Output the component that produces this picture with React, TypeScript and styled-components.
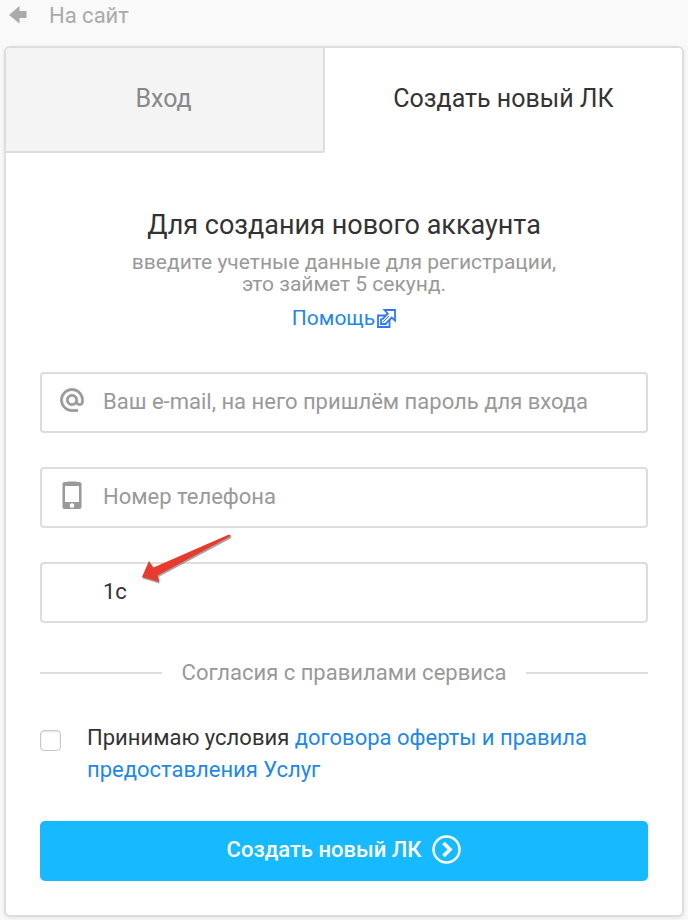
import React from "react";
import styled, { createGlobalStyle } from "styled-components";

const GlobalStyle = createGlobalStyle`
  *, *::before, *::after { box-sizing: border-box; }
  body {
    margin: 0;
    background: #f9f9f9;
    color: #333;
    font-family: Roboto, "Liberation Sans", sans-serif;
    font-size: 22px;
  }
  a { color: #1e88e5; text-decoration: none; }
`;

const Page = styled.div`
  padding: 0 4px 3px;
`;

const BackLink = styled.a`
  display: flex;
  align-items: center;
  gap: 22px;
  height: 30px;
  padding-left: 5px;
  && { color: #aaa; }
`;

const Card = styled.main`
  margin-top: 16px;
  background: #fff;
  border: 2px solid #ddd;
  border-radius: 6px;
  box-shadow: 0 1px 4px rgba(0, 0, 0, 0.08);
`;

const Tabs = styled.div`
  display: grid;
  grid-template-columns: 319fr 357fr;
`;

const Tab = styled.button<{ $active?: boolean }>`
  height: 105px;
  padding: ${(p) => (p.$active ? "0 0 4px" : "0 2px 2px 0")};
  border: 0 solid #ddd;
  border-width: ${(p) => (p.$active ? "0" : "0 2px 2px 0")};
  border-radius: ${(p) => (p.$active ? "0 4px 0 0" : "4px 0 3px 0")};
  background: ${(p) => (p.$active ? "#fff" : "#f4f4f4")};
  color: ${(p) => (p.$active ? "#333" : "#888")};
  font: inherit;
  font-size: 25px;
  cursor: pointer;
`;

const Form = styled.form`
  display: flex;
  flex-direction: column;
  padding: 52px 34px 34px;
`;

const Intro = styled.header`
  display: flex;
  flex-direction: column;
  align-items: center;
  text-align: center;
  margin-bottom: 39px;
  font-size: 21px;
`;

const Title = styled.h1`
  margin: 0 0 6px;
  font-size: 27px;
  line-height: 40px;
  font-weight: 400;
`;

const Subtitle = styled.p`
  margin: 0;
  color: #999;
  line-height: 22px;
`;

const HelpLink = styled.a`
  display: flex;
  align-items: center;
  gap: 2px;
  margin-top: 8px;
  line-height: 30px;
`;

const Fields = styled.div`
  display: grid;
  gap: 34px;
`;

const Field = styled.label`
  display: flex;
  align-items: center;
  height: 61px;
  padding: 0 16px 2px 15px;
  border: 2px solid #ddd;
  border-radius: 4px;
`;

const FieldIcon = styled.span`
  display: flex;
  justify-content: center;
  flex: 0 0 30px;
  margin: 0 16px 3px 0;
  color: #999;
`;

const Input = styled.input`
  flex: 1;
  min-width: 0;
  height: 100%;
  padding: 0;
  border: 0;
  outline: 0;
  background: transparent;
  color: #333;
  font: inherit;
  &::placeholder { color: #999; opacity: 1; }
`;

const Divider = styled.div`
  display: flex;
  align-items: center;
  gap: 20px;
  margin: 35px 0 34px;
  line-height: 30px;
  color: #999;
  &::before, &::after {
    content: "";
    flex: 1;
    height: 2px;
    background: #ddd;
  }
`;

const Consent = styled.div`
  display: flex;
  align-items: flex-start;
  gap: 26px;
  line-height: 32px;
`;

const Checkbox = styled.input`
  appearance: none;
  flex: none;
  width: 21px;
  height: 21px;
  margin: 8px 0 0;
  border: 1px solid #c8c8c8;
  border-radius: 4px;
  background: #fff;
  box-shadow: inset 0 1px 2px rgba(0, 0, 0, 0.12);
  &:checked { background: #1e88e5; }
`;

const Submit = styled.button`
  display: flex;
  align-items: center;
  justify-content: center;
  gap: 11px;
  height: 60px;
  margin-top: 35px;
  padding: 0 0 4px;
  border: 0;
  border-radius: 5px;
  background: #17b9ff;
  color: #fff;
  font: inherit;
  font-weight: 500;
  cursor: pointer;
`;

const PointedField = styled.div`
  position: relative;
`;

const Pointer = styled.svg`
  position: absolute;
  left: 99px;
  top: -30px;
  pointer-events: none;
`;

const BackArrow = () => (
  <svg width="18" height="18" viewBox="0 0 18 18" fill="#aaa" aria-hidden="true">
    <path d="M0 9 10.500 0v5H17.500v7H10.500v5.500z" />
  </svg>
);

const ExternalIcon = () => (
  <svg width="19" height="19" viewBox="0 0 19 19" fill="#fff" stroke="#2f77ee" strokeWidth="1.800" aria-hidden="true">
    <path d="M1 6.500h11.500V18H1z" />
    <path d="M7.500 1H18v10.500l-3.300-3-6 6.200H5v-4l5.800-6z" />
    <path d="M4 9.500v5.500h5.500" />
    <path d="m6 13 6-6" strokeWidth="1" />
  </svg>
);

const AtIcon = () => (
  <svg width="28" height="28" viewBox="0 0 24 24" fill="currentColor" stroke="currentColor" strokeWidth=".4" aria-hidden="true">
    <path d="M12 2C6.480 2 2 6.480 2 12s4.480 10 10 10h5v-2h-5c-4.340 0-8-3.660-8-8s3.660-8 8-8 8 3.660 8 8v1.430c0 .790-.710 1.570-1.500 1.570s-1.500-.780-1.500-1.570V12c0-2.760-2.240-5-5-5s-5 2.240-5 5 2.240 5 5 5c1.380 0 2.640-.560 3.540-1.470.650.890 1.770 1.470 2.960 1.470 1.970 0 3.500-1.600 3.500-3.570V12c0-5.520-4.480-10-10-10zm0 13c-1.660 0-3-1.340-3-3s1.340-3 3-3 3 1.340 3 3-1.340 3-3 3z" />
  </svg>
);

const PhoneIcon = () => (
  <svg width="20" height="29" viewBox="0 0 20 29" fill="currentColor" aria-hidden="true">
    <path
      fillRule="evenodd"
      d="M1.500 1.300C6 .1 14 .1 18.500 1.300q1 .4 1 1.700v23q0 2-2 2h-15q-2 0-2-2V3q0-1.300 1-1.700zM3 5v16h14V5zM10 22.300a2.300 2.300 0 1 0 0 4.600 2.300 2.300 0 0 0 0-4.600z"
    />
  </svg>
);

const CircleChevron = () => (
  <svg width="29" height="29" viewBox="0 0 29 29" fill="none" stroke="#fff" aria-hidden="true">
    <circle cx="14.500" cy="14.500" r="13" strokeWidth="2.500" />
    <path d="m11.500 8 6.500 6.500-6.500 6.500" strokeWidth="3.600" />
  </svg>
);

const RedArrow = () => (
  <Pointer width="96" height="56" viewBox="0 0 96 56" aria-hidden="true">
    <path d="M3.500 46.500 10.500 31 15.500 37 91 4 92.500 6 19.500 45 20.500 51.500z" fill="#897b80" opacity=".7" />
    <path d="M3 45 10 29 14.500 35.500 90 2.500 92 4 18.500 43.500 20.500 50z" fill="#e63b2e" />
  </Pointer>
);

export default function App() {
  return (
    <>
      <GlobalStyle />
      <Page>
        <BackLink href="#site">
          <BackArrow />
          <span>На сайт</span>
        </BackLink>
        <Card>
          <Tabs role="tablist">
            <Tab type="button" role="tab" aria-selected="false">Вход</Tab>
            <Tab type="button" role="tab" aria-selected="true" $active>Создать новый ЛК</Tab>
          </Tabs>
          <Form onSubmit={(e) => e.preventDefault()}>
            <Intro>
              <Title>Для создания нового аккаунта</Title>
              <Subtitle>
                введите учетные данные для регистрации,
                <br />
                это займет 5 секунд.
              </Subtitle>
              <HelpLink href="#help">
                Помощь
                <ExternalIcon />
              </HelpLink>
            </Intro>
            <Fields>
              <Field>
                <FieldIcon><AtIcon /></FieldIcon>
                <Input type="email" aria-label="E-mail" placeholder="Ваш e-mail, на него пришлём пароль для входа" />
              </Field>
              <Field>
                <FieldIcon><PhoneIcon /></FieldIcon>
                <Input type="tel" aria-label="Номер телефона" placeholder="Номер телефона" />
              </Field>
              <PointedField>
                <Field>
                  <FieldIcon />
                  <Input type="text" aria-label="Промокод" defaultValue="1с" />
                </Field>
                <RedArrow />
              </PointedField>
            </Fields>
            <Divider>Согласия с правилами сервиса</Divider>
            <Consent>
              <Checkbox type="checkbox" id="terms" />
              <label htmlFor="terms">
                Принимаю условия <a href="#terms">договора оферты и правила предоставления Услуг</a>
              </label>
            </Consent>
            <Submit type="submit">
              Создать новый ЛК
              <CircleChevron />
            </Submit>
          </Form>
        </Card>
      </Page>
    </>
  );
}
